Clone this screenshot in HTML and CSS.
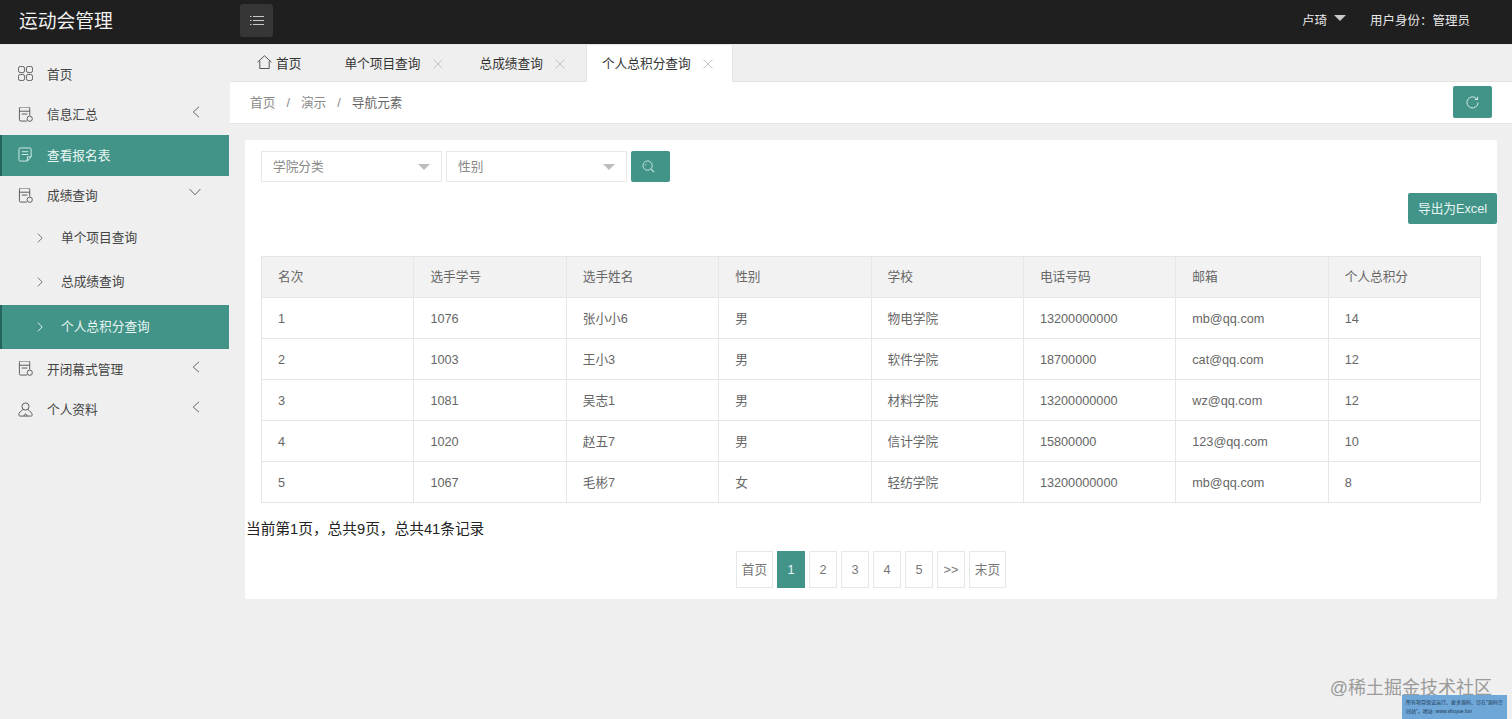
FILE: index.html
```html
<!DOCTYPE html>
<html lang="zh">
<head>
<meta charset="utf-8">
<title>运动会管理</title>
<link rel="stylesheet" href="styles.css">
</head>
<body>
<svg class="defs" width="0" height="0" aria-hidden="true">
  <symbol id="chev-left" viewBox="0 0 8 12"><path d="M7 .8 1.200 6 7 11.200" fill="none" stroke="currentColor" stroke-width="1"/></symbol>
  <symbol id="chev-right" viewBox="0 0 6 10"><path d="M.8.6 5.200 5 .8 9.400" fill="none" stroke="currentColor" stroke-width="1"/></symbol>
  <symbol id="close" viewBox="0 0 10 10"><path d="M.5.5l9 9M9.500.5l-9 9" fill="none" stroke="currentColor" stroke-width="1"/></symbol>
  <symbol id="doc" viewBox="0 0 16 16"><path d="M9.500 15H3A1.500 1.500 0 0 1 1.500 13.500v-12A1.500 1.500 0 0 1 3 0h8A1.500 1.500 0 0 1 12.500 1.500V9M1.500 4.500h11M4 7.500h6" fill="none" stroke="currentColor" stroke-width="1"/><circle cx="12.500" cy="12.500" r="2.800" fill="none" stroke="currentColor" stroke-width="1"/></symbol>
</svg>

<header class="topbar">
  <div class="brand">运动会管理</div>
  <button class="menu-btn" type="button" aria-label="菜单">
    <svg width="14" height="11" viewBox="0 0 14 11"><path d="M3 1.500h11M3 5.500h11M3 9.500h11M0 1.500h1.500M0 5.500h1.500M0 9.500h1.500" fill="none" stroke="#c8c8c8" stroke-width="1"/></svg>
  </button>
  <div class="user">
    <span>卢琦</span><i class="user-caret"></i>
    <span class="role">用户身份：管理员</span>
  </div>
</header>

<div class="shell">
  <nav class="sidebar">
    <a class="nav-item">
      <svg class="nav-icon" viewBox="0 0 16 16"><g fill="none" stroke="currentColor" stroke-width="1"><rect x=".5" y=".5" width="6.500" height="6.500" rx="2"/><rect x="9" y=".5" width="6.500" height="6.500" rx="2"/><rect x=".5" y="9" width="6.500" height="6.500" rx="2"/><rect x="9" y="9" width="6.500" height="6.500" rx="2"/></g></svg>
      <span>首页</span>
    </a>
    <a class="nav-item">
      <svg class="nav-icon"><use href="#doc"/></svg>
      <span>信息汇总</span>
      <svg class="nav-chev"><use href="#chev-left"/></svg>
    </a>
    <a class="nav-item active">
      <svg class="nav-icon" viewBox="0 0 16 16"><path d="M14 10.500V2.500A1.500 1.500 0 0 0 12.500 1h-10A1.500 1.500 0 0 0 1 2.500v11A1.500 1.500 0 0 0 2.500 15H10l4-4.500h-4V15M4 5h7M4 8h7" fill="none" stroke="currentColor" stroke-width="1"/></svg>
      <span>查看报名表</span>
    </a>
    <a class="nav-item">
      <svg class="nav-icon"><use href="#doc"/></svg>
      <span>成绩查询</span>
      <svg class="nav-chev-down" viewBox="0 0 12 8"><path d="M.6 1 6 6.800 11.400 1" fill="none" stroke="currentColor" stroke-width="1"/></svg>
    </a>
    <a class="nav-sub"><svg class="sub-chev"><use href="#chev-right"/></svg><span>单个项目查询</span></a>
    <a class="nav-sub"><svg class="sub-chev"><use href="#chev-right"/></svg><span>总成绩查询</span></a>
    <a class="nav-sub active"><svg class="sub-chev"><use href="#chev-right"/></svg><span>个人总积分查询</span></a>
    <a class="nav-item">
      <svg class="nav-icon"><use href="#doc"/></svg>
      <span>开闭幕式管理</span>
      <svg class="nav-chev"><use href="#chev-left"/></svg>
    </a>
    <a class="nav-item">
      <svg class="nav-icon" viewBox="0 0 16 16"><g fill="none" stroke="currentColor" stroke-width="1"><circle cx="8" cy="4.800" r="3.800"/><path d="M5.500 8C3 9.500 1 11.500.8 13.500c-.1 1 .5 1.500 1.500 1.500h11.400c1 0 1.600-.5 1.500-1.500C14.500 11.500 13 9.500 10.500 8M6 15l2-2.500 2 2.500"/></g></svg>
      <span>个人资料</span>
      <svg class="nav-chev"><use href="#chev-left"/></svg>
    </a>
  </nav>

  <main class="content">
    <div class="tabs">
      <a class="tab tab-home">
        <svg class="home-icon" viewBox="0 0 15 14"><path d="M.5 7.200 7.500.8l7 6.400M2.800 6v7.500h9.400V6" fill="none" stroke="#555" stroke-width="1"/></svg>
        <span>首页</span>
      </a>
      <a class="tab"><span>单个项目查询</span><svg class="tab-close"><use href="#close"/></svg></a>
      <a class="tab"><span>总成绩查询</span><svg class="tab-close"><use href="#close"/></svg></a>
      <a class="tab current"><span>个人总积分查询</span><svg class="tab-close"><use href="#close"/></svg></a>
    </div>

    <div class="crumbs">
      <span>首页</span><i>/</i><span>演示</span><i>/</i><span class="crumb-last">导航元素</span>
      <button class="btn btn-refresh" type="button" aria-label="刷新">
        <svg width="13" height="13" viewBox="0 0 14 14"><path d="M11.800 3.300A6 6 0 1 0 13 7M12.500 .8v3h-3" fill="none" stroke="#dff0ec" stroke-width="1"/></svg>
      </button>
    </div>

    <section class="card">
      <div class="filters">
        <div class="select"><span>学院分类</span><i class="select-caret"></i></div>
        <div class="select"><span>性别</span><i class="select-caret"></i></div>
        <button class="btn btn-search" type="button" aria-label="搜索">
          <svg class="search-icon" width="13" height="13" viewBox="0 0 14 14"><circle cx="6" cy="6" r="5" fill="none" stroke="#cfe8e2" stroke-width="1"/><path d="M9.800 9.800 13 13" stroke="#cfe8e2" stroke-width="1.200"/><path d="M3.500 6a2.500 2.500 0 0 1 1.200-2.200" fill="none" stroke="#cfe8e2" stroke-width=".8"/></svg>
        </button>
      </div>
      <div class="export-row"><button class="btn btn-export" type="button">导出为Excel</button></div>

      <table class="rank-table">
        <thead>
          <tr><th>名次</th><th>选手学号</th><th>选手姓名</th><th>性别</th><th>学校</th><th>电话号码</th><th>邮箱</th><th>个人总积分</th></tr>
        </thead>
        <tbody>
          <tr><td>1</td><td>1076</td><td>张小小6</td><td>男</td><td>物电学院</td><td>13200000000</td><td>mb@qq.com</td><td>14</td></tr>
          <tr><td>2</td><td>1003</td><td>王小3</td><td>男</td><td>软件学院</td><td>18700000</td><td>cat@qq.com</td><td>12</td></tr>
          <tr><td>3</td><td>1081</td><td>吴志1</td><td>男</td><td>材料学院</td><td>13200000000</td><td>wz@qq.com</td><td>12</td></tr>
          <tr><td>4</td><td>1020</td><td>赵五7</td><td>男</td><td>信计学院</td><td>15800000</td><td>123@qq.com</td><td>10</td></tr>
          <tr><td>5</td><td>1067</td><td>毛彬7</td><td>女</td><td>轻纺学院</td><td>13200000000</td><td>mb@qq.com</td><td>8</td></tr>
        </tbody>
      </table>

      <p class="summary">当前第1页，总共9页，总共41条记录</p>

      <div class="pager">
        <a class="page wide">首页</a>
        <a class="page on">1</a>
        <a class="page">2</a>
        <a class="page">3</a>
        <a class="page">4</a>
        <a class="page">5</a>
        <a class="page">&gt;&gt;</a>
        <a class="page wide">末页</a>
      </div>
    </section>
  </main>
</div>

<div class="watermark">@稀土掘金技术社区</div>
<div class="promo">所有项目保证运行、更多源码、尽在"源码空间站"，地址: www.shuyue.fun</div>
</body>
</html>
```

FILE: styles.css
```css
* { box-sizing: border-box; }

html, body { height: 100%; }

body {
  margin: 0;
  height: 719px;
  overflow: hidden;
  display: flex;
  flex-direction: column;
  background: #efefef;
  color: #555;
  font-family: "Liberation Sans", "Noto Sans CJK SC", sans-serif;
  font-size: 12.7px;
  line-height: 18px;
}

.defs { position: absolute; }

a { display: flex; color: inherit; text-decoration: none; }
button { font: inherit; line-height: 18px; border: 0; padding: 0; cursor: pointer; }

/* top bar */
.topbar {
  flex: none;
  height: 45px;
  padding-bottom: 1px;
  display: flex;
  align-items: center;
  background: #1f1f1f;
  border-bottom: 1px solid #e6e6e6;
  color: #e8e8e8;
}
.brand {
  width: 240px;
  padding: 0 0 0 19px;
  font-size: 18.800px;
  line-height: 24px;
  color: #f2f2f2;
}
.menu-btn {
  width: 33px;
  height: 33px;
  margin-top: -2px;
  display: flex;
  align-items: center;
  justify-content: center;
  border-radius: 3px;
  background: #363636;
}
.user {
  margin-left: auto;
  padding: 0 42px 1px 0;
  display: flex;
  align-items: center;
  font-size: 12.500px;
}
.user-caret {
  width: 0;
  height: 0;
  margin: -7px 0 0 7px;
  border-left: 6px solid transparent;
  border-right: 6px solid transparent;
  border-top: 6px solid #c8c8c8;
}
.role { margin-left: 24px; }

/* layout */
.shell { flex: 1; min-height: 0; display: flex; }

/* sidebar */
.sidebar {
  flex: none;
  width: 230px;
  padding-top: 9px;
  background: #efefef;
  color: #444;
}
.nav-item {
  height: 40.500px;
  padding: 1px 0 0 18px;
  align-items: center;
}
.nav-item span { margin-left: 14px; }
.nav-icon { flex: none; width: 15px; height: 15px; margin-top: -2px; color: #555; }
.nav-chev {
  width: 8px;
  height: 12px;
  margin: -6px 30px 0 auto;
  color: #666;
}
.nav-chev-down {
  width: 12px;
  height: 8px;
  margin: -8px 29px 0 auto;
  color: #666;
}
.nav-sub {
  height: 44.300px;
  padding-left: 37px;
  align-items: center;
}
.nav-sub span { margin-left: 18px; }
.sub-chev { width: 6px; height: 10px; color: #777; }

.active {
  margin-right: 1px;
  background: #429488;
  color: #e9f6f3;
  box-shadow: inset 2px 0 0 #23655b;
}
.active .nav-icon, .active .sub-chev { color: #d9efea; }

/* main column */
.content { flex: 1; min-width: 0; display: flex; flex-direction: column; }

.tabs {
  flex: none;
  height: 37px;
  padding-left: 12px;
  display: flex;
  gap: 2px;
  background: #efefef;
  border-bottom: 1px solid #e2e2e2;
}
.tab {
  height: 37px;
  padding: 0 20px 0 15px;
  align-items: center;
  color: #333;
}
.tab-home { padding-right: 26px; }
.home-icon { width: 15px; height: 14px; margin: -4px 4px 0 0; }
.tab-close { width: 10px; height: 10px; margin: 0 0 0 12px; color: #c4c4c4; }
.current {
  margin-left: -1px;
  background: #fff;
  border: 1px solid #e6e6e6;
  border-width: 0 1px;
  padding-left: 15px;
  padding-right: 19px;
}

.crumbs {
  flex: none;
  height: 42px;
  padding: 0 20px;
  display: flex;
  align-items: center;
  background: #fff;
  border-bottom: 1px solid #e6e6e6;
  color: #8a8a8a;
}
.crumbs i { margin: 0 11px; font-style: normal; }
.crumb-last { color: #666; }

.btn {
  display: flex;
  align-items: center;
  justify-content: center;
  background: #429488;
  border-radius: 2px;
  color: #e6f4f1;
}
.btn-refresh { width: 39px; height: 32px; margin: -1px 0 0 auto; }

/* card */
.card {
  width: 1252px;
  height: 459px;
  margin: 16px 0 0 15px;
  padding-top: 11px;
  background: #fff;
  border-radius: 2px;
}
.filters {
  height: 31px;
  padding-left: 16px;
  display: flex;
  gap: 4px;
}
.select {
  width: 181px;
  padding: 0 11px;
  display: flex;
  align-items: center;
  justify-content: space-between;
  background: #fff;
  border: 1px solid #e8e8e8;
  color: #888;
}
.select-caret {
  width: 0;
  height: 0;
  border-left: 6px solid transparent;
  border-right: 6px solid transparent;
  border-top: 6px solid #bdbdbd;
}
.btn-search { width: 39px; }
.search-icon { margin-right: 4px; }
.export-row { margin-top: 11px; display: flex; justify-content: flex-end; }
.btn-export { width: 89px; height: 31px; }

.rank-table {
  width: 1220px;
  margin: 32px 0 0 16px;
  table-layout: fixed;
  border-collapse: collapse;
  color: #666;
}
.rank-table th, .rank-table td {
  height: 41px;
  padding: 0 0 0 16px;
  border: 1px solid #e6e6e6;
  font-weight: 400;
  text-align: left;
}
.rank-table td { padding-top: 2px; }
.rank-table th { background: #f2f2f2; }

.summary {
  margin: 17px 0 0 1px;
  font-size: 14.700px;
  line-height: 18px;
  color: #222;
}

.pager {
  margin: 13px 0 0 491px;
  display: flex;
  gap: 4px;
}
.page {
  width: 28px;
  height: 37px;
  align-items: center;
  justify-content: center;
  border: 1px solid #e8e8e8;
  background: #fff;
  color: #777;
}
.page.wide { width: 37px; }
.page.wide:first-child { margin-right: 0; }
.page.on { background: #429488; border-color: #429488; color: #e9f6f3; }

/* overlays */
.watermark {
  position: absolute;
  right: 20px;
  top: 677px;
  font-size: 18px;
  line-height: 22px;
  color: #9a9a9a;
}
.promo {
  position: absolute;
  left: 1402px;
  top: 695px;
  width: 105px;
  height: 24px;
  padding: 3px 4px;
  background: #6ea7d8;
  color: #1d3550;
  font-size: 5px;
  line-height: 9px;
}
```
